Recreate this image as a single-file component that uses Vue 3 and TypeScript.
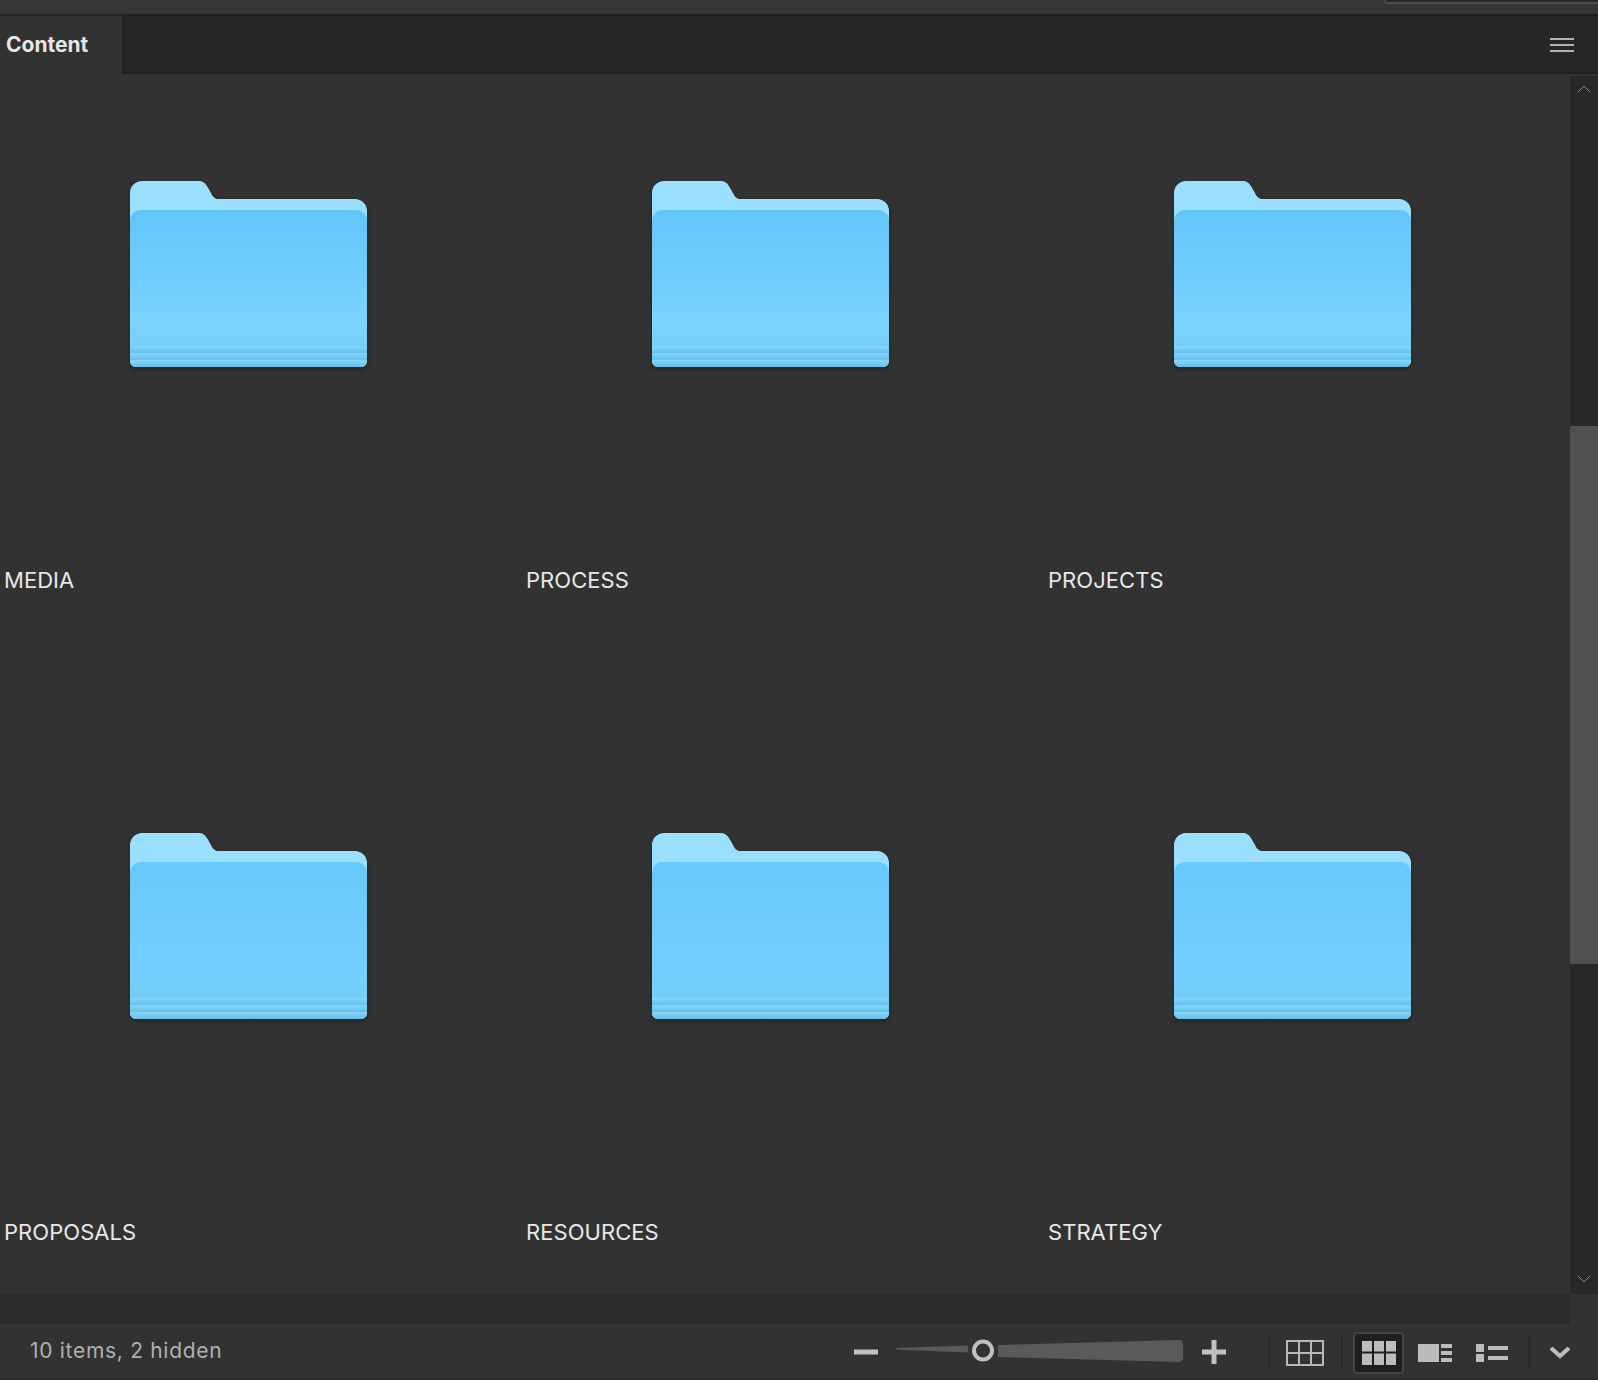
<script setup lang="ts">
const folders: string[] = ['MEDIA', 'PROCESS', 'PROJECTS', 'PROPOSALS', 'RESOURCES', 'STRATEGY']
</script>

<template>
  <div class="panel">
    <div class="topstrip"><span class="topbox"></span></div>
    <div class="tabbar">
      <div class="tab">Content</div>
      <div class="tabrest">
        <svg class="menu" width="24" height="14" viewBox="0 0 24 14">
          <path d="M0 1h24M0 7h24M0 13h24" stroke="#b4b4b4" stroke-width="2" />
        </svg>
      </div>
    </div>

    <svg class="defs" width="0" height="0">
      <defs>
        <linearGradient id="fBack" x1="0" y1="0" x2="0" y2="1">
          <stop offset="0" stop-color="#9ce0ff" />
          <stop offset="1" stop-color="#93dcff" />
        </linearGradient>
        <linearGradient id="fFront" x1="0" y1="0" x2="0" y2="1">
          <stop offset="0" stop-color="#62c5f9" />
          <stop offset="0.4" stop-color="#6ecdfc" />
          <stop offset="0.72" stop-color="#7dd4ff" />
          <stop offset="0.87" stop-color="#76cff9" />
          <stop offset="1" stop-color="#72cdf8" />
        </linearGradient>
        <linearGradient id="fFrontLow" x1="0" y1="0" x2="0" y2="1">
          <stop offset="0" stop-color="#67c8fb" />
          <stop offset="0.72" stop-color="#75d0ff" />
          <stop offset="0.87" stop-color="#72cdf9" />
          <stop offset="1" stop-color="#72cdf8" />
        </linearGradient>
        <linearGradient id="fBand" x1="0" y1="0" x2="0" y2="1">
          <stop offset="0" stop-color="#8ad8fb" />
          <stop offset="1" stop-color="#62bfeb" />
        </linearGradient>
      </defs>
    </svg>

    <div class="middle">
      <div class="grid">
        <div v-for="(name, i) in folders" :key="name" class="cell">
          <svg class="folder" width="237" height="190" viewBox="0 0 237 190">
            <path
              d="M0 12a12 12 0 0 1 12-12h56c5 0 7 2 9 5l4 7c2 4 4 6 8 6h136a12 12 0 0 1 12 12v150a6 6 0 0 1-6 6H6a6 6 0 0 1-6-6z"
              fill="url(#fBack)"
            />
            <path
              d="M0 40a11 11 0 0 1 11-11h215a11 11 0 0 1 11 11v140a6 6 0 0 1-6 6H6a6 6 0 0 1-6-6z"
              :fill="i < 3 ? 'url(#fFront)' : 'url(#fFrontLow)'"
            />
            <rect x="0" y="165" width="237" height="7" fill="url(#fBand)" />
            <rect x="0" y="172" width="237" height="7" fill="url(#fBand)" />
            <path d="M0 179h237v1a6 6 0 0 1-6 6H6a6 6 0 0 1-6-6z" fill="url(#fBand)" />
          </svg>
          <div class="label">{{ name }}</div>
        </div>
      </div>
      <div class="scrollbar">
        <svg class="arrow" width="14" height="8" viewBox="0 0 14 8">
          <path d="M1 7l6-6 6 6" fill="none" stroke="#8c8c8c" stroke-width="1" />
        </svg>
        <div class="track"><div class="thumb"></div></div>
        <svg class="arrow" width="14" height="8" viewBox="0 0 14 8">
          <path d="M1 1l6 6 6-6" fill="none" stroke="#8c8c8c" stroke-width="1" />
        </svg>
      </div>
    </div>

    <div class="hbar"><div class="hbar-track"></div><div class="corner"></div></div>

    <div class="status">
      <div class="count">10 items, 2 hidden</div>
      <svg class="zoomer" width="384" height="32" viewBox="0 0 384 32">
        <rect x="0" y="14.500" width="24" height="5" fill="#c0c0c0" />
        <path d="M42 13l72-2.500v7l-72-3z" fill="#5a5a5a" />
        <path d="M144 10l180-5q5 0 5 4v14q0 4-5 4l-180-5z" fill="#5a5a5a" />
        <circle cx="129" cy="15.500" r="9" fill="#323232" stroke="#c0c0c0" stroke-width="4" />
        <path d="M348 17h24M360 5v24" stroke="#c0c0c0" stroke-width="5" />
      </svg>
      <span class="sep first"></span>
      <svg class="gridicon" width="38" height="26" viewBox="0 0 38 26">
        <path
          d="M1 1h36v24H1zM13 1v24M25 1v24M1 13h36"
          fill="none"
          stroke="#b8b8b8"
          stroke-width="2"
        />
      </svg>
      <span class="sep second"></span>
      <div class="selected">
        <svg width="34" height="24" viewBox="0 0 34 24">
          <path
            d="M0 0h10v10.500H0zM12 0h10v10.500H12zM24 0h10v10.500H24zM0 12.500h10V24H0zM12 12.500h10V24H12zM24 12.500h10V24H24z"
            fill="#bcbcbc"
          />
        </svg>
      </div>
      <svg class="detail" width="34" height="18" viewBox="0 0 34 18">
        <path d="M0 0h21v18H0zM23 0h11v4H23zM23 7h11v4H23zM23 14h11v4H23z" fill="#bcbcbc" />
      </svg>
      <svg class="listicon" width="32" height="18" viewBox="0 0 32 18">
        <path d="M0 0h8v8H0zM0 10h8v8H0zM12 2h20v4H12zM12 12h20v4H12z" fill="#bcbcbc" />
      </svg>
      <span class="sep third"></span>
      <svg class="chev" width="22" height="14" viewBox="0 0 22 14">
        <path d="M2 2l9 8 9-8" fill="none" stroke="#bcbcbc" stroke-width="4" />
      </svg>
    </div>
  </div>
</template>

<style>
html,
body {
  background: #323232;
}
</style>

<style scoped>
.panel {
  width: 1598px;
  height: 1380px;
  display: flex;
  flex-direction: column;
  background: #323232;
  font-family: Inter, 'Liberation Sans', sans-serif;
  overflow: hidden;
}
.topstrip {
  height: 14px;
  flex: none;
  background: #363636;
  display: flex;
  justify-content: flex-end;
  overflow: hidden;
}
.topbox {
  width: 214px;
  height: 4px;
  border-left: 2px solid #4c4c4c;
  border-bottom: 2px solid #4c4c4c;
  border-bottom-left-radius: 3px;
  background: #2a2a2a;
  box-sizing: border-box;
}
.tabbar {
  height: 60px;
  flex: none;
  display: flex;
}
.tab {
  width: 122px;
  padding: 16px 0 0 6px;
  box-sizing: border-box;
  background: #323232;
  border-top: 2px solid #262626;
  color: #e6e6e6;
  font-size: 21px;
  font-weight: 700;
}
.tabrest {
  flex: 1;
  display: flex;
  justify-content: flex-end;
  align-items: center;
  background: #262626;
  border-top: 2px solid #1f1f1f;
  border-left: 2px solid #1f1f1f;
  border-bottom: 2px solid #1f1f1f;
}
.menu {
  margin: 2px 24px 0 0;
}
.defs {
  position: absolute;
}
.middle {
  flex: 1;
  display: flex;
  min-height: 0;
}
.grid {
  flex: 1;
  display: grid;
  grid-template-columns: repeat(3, 522px);
  grid-auto-rows: 652px;
  padding-top: 107px;
  overflow: hidden;
}
.cell {
  display: flex;
  flex-direction: column;
  align-items: flex-start;
}
.folder {
  margin-left: 130px;
  filter: drop-shadow(0 2px 2px rgba(0, 0, 0, 0.3));
}
.label {
  margin: 196px 0 0 4px;
  color: #e8e8e8;
  font-size: 22px;
  line-height: 26px;
  letter-spacing: 0.05px;
}
.scrollbar {
  width: 28px;
  margin-top: 2px;
  background: #282828;
  display: flex;
  flex-direction: column;
  align-items: center;
  padding: 9px 0 11px;
  box-sizing: border-box;
}
.arrow {
  flex: none;
}
.track {
  flex: 1;
  width: 100%;
  padding-top: 333px;
  box-sizing: border-box;
}
.thumb {
  width: 28px;
  height: 538px;
  background: #505050;
}
.hbar {
  height: 30px;
  flex: none;
  display: flex;
}
.hbar-track {
  flex: 1;
  background: #2b2b2b;
}
.corner {
  width: 28px;
  background: #323232;
}
.status {
  height: 56px;
  flex: none;
  display: flex;
  align-items: center;
  background: #323232;
  border-bottom: 2px solid #2b2b2b;
  box-sizing: border-box;
}
.count {
  margin: 0 0 2px 30px;
  width: 824px;
  color: #b0b0b0;
  font-size: 21px;
  letter-spacing: 0.7px;
}
.zoomer {
  flex: none;
}
.sep {
  width: 2px;
  height: 36px;
  margin-top: 2px;
  background: #2a2a2a;
  flex: none;
}
.first {
  margin-left: 30px;
}
.gridicon {
  margin: 3px 0 0 16px;
  flex: none;
}
.second {
  margin-left: 17px;
}
.selected {
  margin: 3px 0 0 10px;
  width: 51px;
  height: 42px;
  box-sizing: border-box;
  background: #1f1f1f;
  border: 2px solid #454545;
  border-radius: 4px;
  display: flex;
  align-items: center;
  justify-content: center;
  flex: none;
}
.detail {
  margin: 3px 0 0 14px;
  flex: none;
}
.listicon {
  margin: 3px 0 0 24px;
  flex: none;
}
.third {
  margin-left: 20px;
}
.chev {
  margin: 3px 0 0 19px;
  flex: none;
}
</style>
